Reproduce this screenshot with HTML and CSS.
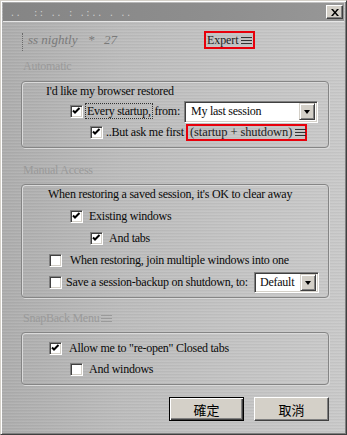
FILE: index.html
```html
<!DOCTYPE html>
<html lang="en">
<head>
  <meta charset="UTF-8" />
  <title>Session Manager Options</title>
  <link rel="stylesheet" href="styles.css">
</head>
<body>
  <div class="window">
    <div class="titlebar">
      <span class="title">..&nbsp; :: .. : .:.. . ..</span>
      <span class="close">
        <svg width="8" height="7" viewBox="0 0 8 7"><path d="M0 0h2l2 2.5L6 0h2L5 3.5 8 7H6L4 4.5 2 7H0l3-3.5z" fill="#000"/></svg>
      </span>
    </div>

    <div class="content">
      <div class="head">
        <span class="version"><span class="dots"></span><i>ss nightly</i><span class="star">*</span><i>27</i></span>
        <span class="tag tag-expert">Expert<span class="menu-icon"></span></span>
      </div>

      <div class="legend first">Automatic</div>
      <div class="group g-auto">
        <div class="row r-head in-24">I'd like my browser restored</div>
        <div class="row r-tall in-48">
          <span class="cb checked"></span>
          <span class="lbl-startup"><span class="focus">Every startup,</span> from:</span>
          <span class="select sel-session">My last session<span class="arrow"></span></span>
        </div>
        <div class="row r-last in-68">
          <span class="cb checked"></span>
          <span class="lbl-ask">..But ask me first</span>
          <span class="tag tag-ask">(startup + shutdown)<span class="menu-icon"></span></span>
        </div>
      </div>

      <div class="legend">Manual Access</div>
      <div class="group g-manual">
        <div class="row r-head in-26">When restoring a saved session, it's OK to clear away</div>
        <div class="row in-48"><span class="cb checked"></span><span class="lbl">Existing windows</span></div>
        <div class="row in-68"><span class="cb checked"></span><span class="lbl">And tabs</span></div>
        <div class="row in-27"><span class="cb"></span><span class="lbl lbl-wide">When restoring, join multiple windows into one</span></div>
        <div class="row in-27">
          <span class="cb"></span><span class="lbl-save">Save a session-backup on shutdown, to:</span>
          <span class="select sel-default">Default<span class="arrow"></span></span>
        </div>
      </div>

      <div class="legend">SnapBack Menu <span class="menu-icon faint"></span></div>
      <div class="group g-snap">
        <div class="row in-27"><span class="cb checked"></span><span class="lbl lbl-allow">Allow me to "re-open" Closed tabs</span></div>
        <div class="row in-48"><span class="cb"></span><span class="lbl">And windows</span></div>
      </div>

      <div class="buttons">
        <button class="btn default" type="button">確定</button>
        <button class="btn" type="button">取消</button>
      </div>
    </div>
  </div>
</body>
</html>
```

FILE: styles.css
```css
html, body {
  margin: 0;
  padding: 0;
}
body {
  width: 347px;
  height: 435px;
  font-family: "Liberation Serif", "Noto Sans CJK TC", serif;
  font-size: 12px;
  letter-spacing: -0.25px;
  color: #0a0a0a;
}
.window {
  box-sizing: border-box;
  width: 347px;
  height: 435px;
  border-top: 1px solid #d4d0c8;
  border-left: 1px solid #d4d0c8;
  border-right: 1px solid #404040;
  border-bottom: 1px solid #404040;
  box-shadow: inset 1px 1px 0 #fff, inset -1px -1px 0 #808080;
  padding: 2px;
  background-color: #bebebe;
  background-image:
    repeating-linear-gradient(180deg, rgba(255,255,255,0.07) 0 1px, rgba(0,0,0,0.03) 1px 2px, transparent 2px 3px),
    linear-gradient(90deg, #adadad 0%, #bcbcbc 35%, #c4c4c4 70%, #c9c9c9 100%);
  display: flex;
  flex-direction: column;
}
.titlebar {
  height: 18px;
  background: linear-gradient(90deg, #858585, #8e8e8e 60%, #979797);
  border-bottom: 1px solid #e6e6e6;
  display: flex;
  align-items: center;
  justify-content: space-between;
  padding: 0 1px 0 7px;
}
.title {
  font-family: "DejaVu Sans Mono", monospace;
  font-size: 8px;
  letter-spacing: 1px;
  color: #d0d0d0;
  margin-top: 3px;
}
.close {
  box-sizing: border-box;
  width: 17px;
  height: 14px;
  background: #d4d0c8;
  border-top: 1px solid #fff;
  border-left: 1px solid #fff;
  border-right: 1px solid #404040;
  border-bottom: 1px solid #404040;
  box-shadow: inset -1px -1px 0 #808080;
  display: flex;
  align-items: center;
  justify-content: center;
}

.content {
  flex: 1;
  padding: 0 15px 0 18px;
}
.head {
  height: 18px;
  margin-top: 9px;
  display: flex;
  align-items: center;
}
.version {
  display: flex;
  align-items: center;
  color: #7a7a7a;
  font-size: 13px;
  letter-spacing: 0;
  width: 183px;
}
.version .dots {
  width: 0;
  height: 18px;
  border-left: 1px dotted #6a6a6a;
  margin: 4px 5px 0 1px;
}
.version .star {
  margin: 0 9px 0 11px;
}
.tag {
  box-sizing: border-box;
  height: 18px;
  border: 2px solid #e8000b;
  display: inline-flex;
  align-items: center;
  color: #222;
  font-size: 12.5px;
  letter-spacing: -0.1px;
  white-space: nowrap;
}
.tag-expert {
  width: 51px;
  padding-left: 1px;
  font-size: 12px;
}
.tag-ask {
  width: 121px;
  height: 17px;
  padding-left: 2px;
}
.menu-icon {
  display: inline-block;
  flex: none;
  width: 11px;
  height: 5px;
  margin-left: 3px;
  border-top: 1px solid #333;
  border-bottom: 1px solid #333;
  background: linear-gradient(#333, #333) 0 2px / 11px 1px no-repeat;
}
.menu-icon.faint {
  border-color: #9a9a9a;
  background-image: linear-gradient(#9a9a9a, #9a9a9a);
  margin-left: 2px;
}

.legend {
  color: #9a9a9a;
  height: 16px;
  margin: 12px 0 6px 2px;
  display: flex;
  align-items: center;
}
.legend.first {
  margin: 9px 0 7px 2px;
}
.g-auto + .legend {
  margin-top: 14px;
}
.group {
  border: 1px solid #858585;
  border-radius: 4px;
  box-shadow: inset 1px 1px 0 #dadada, 1px 1px 0 #dadada;
}
.g-auto { padding: 0 0 6px; }
.g-manual { padding: 0 0 4px; }
.g-snap { padding: 5px 0 4px; }

.row {
  height: 22px;
  display: flex;
  align-items: center;
  white-space: nowrap;
}
.g-snap .row { height: 21px; }
.r-head { height: 18px; }
.g-manual .r-head { margin-bottom: 2px; }
.r-tall { height: 23px; }
.r-last { height: 18px; }
.in-24 { padding-left: 24px; }
.in-26 { padding-left: 26px; }
.in-27 { padding-left: 27px; }
.in-48 { padding-left: 48px; }
.in-68 { padding-left: 68px; }

.cb {
  box-sizing: border-box;
  width: 13px;
  height: 13px;
  flex: none;
  background: #fff;
  border-top: 1px solid #808080;
  border-left: 1px solid #808080;
  border-right: 1px solid #fff;
  border-bottom: 1px solid #fff;
  box-shadow: inset 1px 1px 0 #404040, inset -1px -1px 0 #d4d0c8;
}
.cb.checked {
  background:
    url("data:image/svg+xml;utf8,<svg xmlns='http://www.w3.org/2000/svg' width='11' height='11'><path d='M2 4.5 L4 6.5 L8.5 2' fill='none' stroke='black' stroke-width='2'/></svg>") center / 11px 11px no-repeat,
    #fff;
}
.lbl { margin-left: 6px; }
.lbl-wide { margin-left: 8px; }
.lbl-allow { margin-left: 7px; }
.lbl-startup {
  width: 98px;
  margin-left: 3px;
}
.lbl-ask {
  width: 80px;
  margin-left: 3px;
}
.lbl-save {
  width: 188px;
  margin-left: 4px;
}
.focus {
  padding: 0 1px;
  outline: 1px dotted #333;
  outline-offset: 0;
}

.select {
  box-sizing: border-box;
  height: 22px;
  background: #fff;
  border-top: 1px solid #808080;
  border-left: 1px solid #808080;
  border-right: 1px solid #fff;
  border-bottom: 1px solid #fff;
  box-shadow: inset 1px 1px 0 #404040, inset -1px -1px 0 #d4d0c8;
  display: flex;
  align-items: center;
  padding: 0 2px 0 6px;
  justify-content: space-between;
}
.sel-session {
  width: 134px;
}
.sel-default {
  width: 65px;
  height: 21px;
  padding-left: 5px;
}
.arrow {
  box-sizing: border-box;
  width: 16px;
  height: 17px;
  background: #d4d0c8;
  border-top: 1px solid #d4d0c8;
  border-left: 1px solid #d4d0c8;
  border-right: 1px solid #404040;
  border-bottom: 1px solid #404040;
  box-shadow: inset 1px 1px 0 #fff, inset -1px -1px 0 #808080;
  position: relative;
}
.arrow::after {
  content: "";
  position: absolute;
  left: 4px;
  top: 6px;
  border-left: 3.5px solid transparent;
  border-right: 3.5px solid transparent;
  border-top: 4px solid #000;
}

.buttons {
  display: flex;
  justify-content: flex-end;
  gap: 10px;
  margin-top: 12px;
}
.btn {
  box-sizing: border-box;
  width: 75px;
  height: 24px;
  padding: 0;
  font-family: "Noto Sans CJK TC", sans-serif;
  font-size: 13px;
  letter-spacing: 0;
  color: #000;
  background: #d4d0c8;
  border-top: 1px solid #fff;
  border-left: 1px solid #fff;
  border-right: 1px solid #404040;
  border-bottom: 1px solid #404040;
  box-shadow: inset -1px -1px 0 #808080;
}
.btn.default {
  border: 1px solid #000;
  box-shadow: inset 1px 1px 0 #fff, inset -1px -1px 0 #404040, inset -2px -2px 0 #808080;
}
```
